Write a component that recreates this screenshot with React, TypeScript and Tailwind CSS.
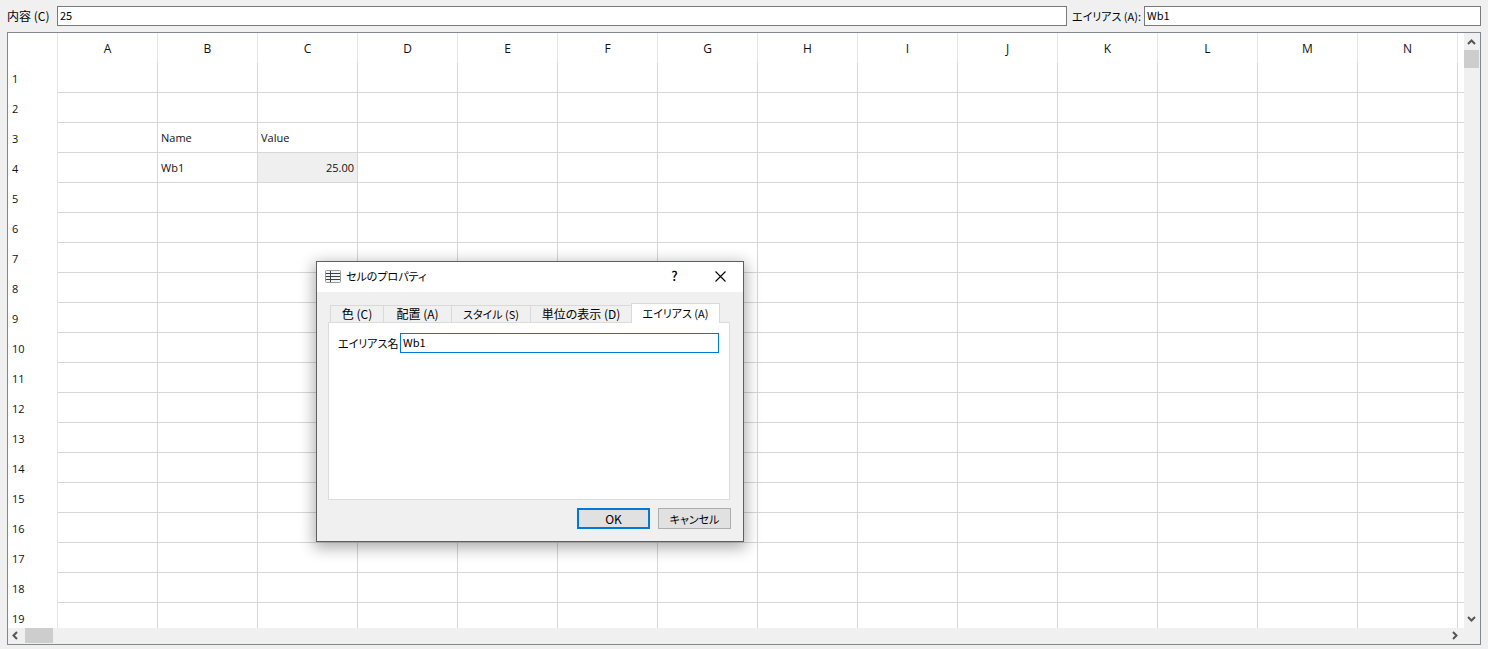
import React, { useState } from "react";

const columns = "ABCDEFGHIJKLMN".split("");
const rows = Array.from({ length: 19 }, (_, i) => i + 1);

const cells: Record<string, string> = {
  B3: "Name",
  C3: "Value",
  B4: "Wb1",
  C4: "25.00",
};

const tabs = [
  { label: "色 (C)", style: "w-[54px] text-[12px]" },
  { label: "配置 (A)", style: "w-[68px] text-[12px]" },
  { label: "スタイル (S)", style: "w-[79px] text-[11px]" },
  { label: "単位の表示 (D)", style: "w-[100px] text-[12px]" },
  { label: "エイリアス (A)", style: "w-[89px] text-[11px]" },
];

const chevrons = {
  up: "M1 6 4.5 2.5 8 6",
  down: "M1 3 4.5 6.5 8 3",
  left: "M6 1 2.5 4.5 6 8",
  right: "M3 1 6.5 4.5 3 8",
};

function ScrollButton({ dir, label }: { dir: keyof typeof chevrons; label: string }) {
  return (
    <button aria-label={label} className="flex size-[15px] shrink-0 items-center justify-center">
      <svg width="9" height="9" viewBox="0 0 9 9" fill="none" stroke="#555" strokeWidth="2">
        <path d={chevrons[dir]} />
      </svg>
    </button>
  );
}

function Sheet() {
  return (
    <table className="w-full table-fixed border-separate border-spacing-0 bg-white font-['Open_Sans',sans-serif] text-[11px] text-[#111]">
      <colgroup>
        <col className="w-[50px]" />
        {columns.map((c) => (
          <col key={c} className="w-[100px]" />
        ))}
        <col />
      </colgroup>
      <thead>
        <tr className="h-[30px]">
          <td className="border-r border-[#e5e5e5]" />
          {columns.map((c) => (
            <th
              key={c}
              scope="col"
              className="border-r border-[#e5e5e5] p-0 pt-0.5 text-center text-[12px] font-normal"
            >
              {c}
            </th>
          ))}
          <td />
        </tr>
      </thead>
      <tbody>
        {rows.map((r) => (
          <tr key={r} className="h-[30px]">
            <th scope="row" className="border-r border-[#e5e5e5] p-0 pt-0.5 pl-1 text-left font-normal">
              {r}
            </th>
            {columns.map((c) => {
              const id = c + r;
              return (
                <td
                  key={c}
                  className={
                    "border-r border-b border-[#d6d6d6] px-[3px] pt-0.5 pb-0 " +
                    (id === "C4" ? "bg-[#efefef] text-right" : "")
                  }
                >
                  {cells[id]}
                </td>
              );
            })}
            <td className="border-b border-[#d6d6d6] p-0" />
          </tr>
        ))}
      </tbody>
    </table>
  );
}

function PropertiesDialog() {
  const [active, setActive] = useState(4);
  return (
    <div
      role="dialog"
      aria-labelledby="dialog-title"
      className="absolute top-[261px] left-[316px] w-[428px] border border-[#5f5f5f] bg-[#f0f0f0] shadow-[0_4px_14px_2px_rgba(0,0,0,0.32)]"
    >
      <div className="flex h-[30px] items-center bg-white pb-0.5 pl-2">
        <svg width="16" height="13" viewBox="0 0 16 13">
          <rect x="0.5" y="0.5" width="15" height="12" rx="1" fill="#f4f4f4" stroke="#999" />
          <path d="M1 3.5H15M1 6.5H15M1 9.5H15M5.5 1V12" stroke="#3a4044" strokeWidth="1" />
        </svg>
        <h1 id="dialog-title" className="ml-[5px] flex-1 text-[11px] leading-4 font-normal">
          セルのプロパティ
        </h1>
        <button aria-label="ヘルプ" className="h-full w-[45px] text-[13px] font-medium">
          ?
        </button>
        <button aria-label="閉じる" className="flex h-full w-[46px] items-center justify-center">
          <svg width="11" height="11" viewBox="0 0 11 11" fill="none" stroke="#000" strokeWidth="1.1">
            <path d="M.5.5 10.5 10.5M10.5.5.5 10.5" />
          </svg>
        </button>
      </div>

      <div className="px-[11px] pt-[11px] pb-3">
        <div role="tablist" className="flex h-[19px] items-end pl-px">
          {tabs.map((t, i) => (
            <button
              key={t.label}
              role="tab"
              aria-selected={i === active}
              onClick={() => setActive(i)}
              className={
                "shrink-0 border-t border-[#d9d9d9] leading-4 whitespace-nowrap " +
                (i === active
                  ? "relative z-10 -mb-px h-5 border-x bg-white pb-px "
                  : "h-[17px] bg-[#f0f0f0] pb-0.5 ") +
                (i === active ? "" : i === 0 ? "border-x " : i + 1 === active ? "" : "border-r ") +
                (i === 0 ? "ml-px " : "") +
                t.style
              }
            >
              {t.label}
            </button>
          ))}
        </div>
        <div
          role="tabpanel"
          className="flex h-[178px] w-[402px] items-start border border-[#dcdcdc] bg-white px-[9px] pt-[10px]"
        >
          <label htmlFor="alias-name" className="w-[62px] shrink-0 text-[11px] leading-5 whitespace-nowrap">
            エイリアス名
          </label>
          <input
            id="alias-name"
            defaultValue="Wb1"
            className="h-5 w-[319px] border border-[#0078d7] bg-white px-0.5 pb-0.5 text-[11px] outline-none"
          />
        </div>
        <div className="mt-2 flex justify-end gap-2 pr-px">
          <button className="h-[21px] w-[73px] border-2 border-[#0078d7] bg-[#e1e1e1] leading-4">OK</button>
          <button className="h-[21px] w-[73px] border border-[#adadad] bg-[#e1e1e1] text-[11px] leading-4">
            キャンセル
          </button>
        </div>
      </div>
    </div>
  );
}

export default function App() {
  return (
    <div className="relative flex h-screen flex-col overflow-hidden bg-[#f0f0f0] pr-[7px] pb-1 pl-[7px] font-['Noto_Sans_CJK_JP',sans-serif] text-[12px] text-black [font-feature-settings:'palt']">
      <div className="flex h-8 shrink-0 items-center">
        <label htmlFor="content" className="w-[50px] shrink-0 whitespace-nowrap">
          内容 (C)
        </label>
        <input
          id="content"
          defaultValue="25"
          className="h-5 min-w-0 flex-1 border border-[#7a7a7a] bg-white px-0.5 pb-0.5 text-[11px] outline-none"
        />
        <label htmlFor="alias" className="ml-[5px] w-[72px] shrink-0 text-[11px] whitespace-nowrap">
          エイリアス (A):
        </label>
        <input
          id="alias"
          defaultValue="Wb1"
          className="h-5 w-[337px] border border-[#7a7a7a] bg-white px-0.5 pb-0.5 text-[11px] outline-none"
        />
      </div>

      <div className="flex min-h-0 flex-1 flex-col border border-[#828790] bg-[#f0f0f0]">
        <div className="flex min-h-0 flex-1">
          <div className="min-w-0 flex-1 overflow-hidden bg-white">
            <Sheet />
          </div>
          <div className="flex w-4 shrink-0 flex-col pt-0.5 pb-0.5">
            <ScrollButton dir="up" label="上へ" />
            <div className="mr-px h-[18px] bg-[#cdcdcd]" />
            <div className="flex-1" />
            <ScrollButton dir="down" label="下へ" />
          </div>
        </div>
        <div className="flex h-4 shrink-0 pr-[18px]">
          <ScrollButton dir="left" label="左へ" />
          <div className="mb-px ml-0.5 w-7 bg-[#cdcdcd]" />
          <div className="flex-1" />
          <ScrollButton dir="right" label="右へ" />
        </div>
      </div>

      <PropertiesDialog />
    </div>
  );
}
